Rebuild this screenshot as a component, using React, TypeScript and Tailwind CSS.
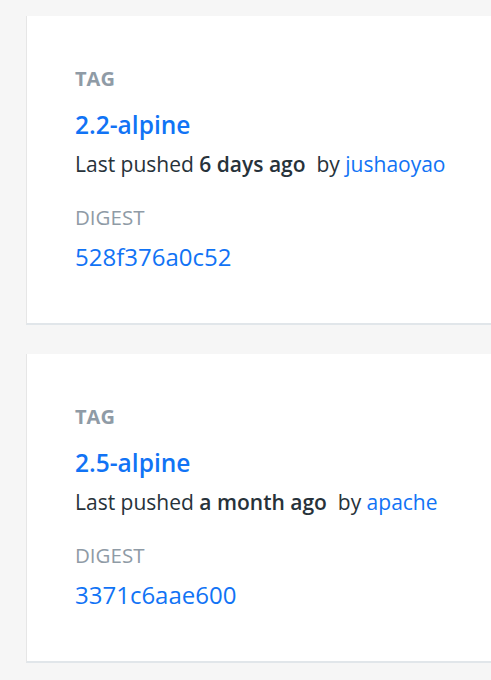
const tags = [
  { name: '2.2-alpine', pushed: '6 days ago', by: 'jushaoyao', digest: '528f376a0c52' },
  { name: '2.5-alpine', pushed: 'a month ago', by: 'apache', digest: '3371c6aae600' },
];

function TagCard({ tag }: { tag: (typeof tags)[number] }) {
  return (
    <div className="bg-white border-l border-l-[#e6e6e6] border-b-2 border-b-[#e1e6ea] pl-[48px] pt-[49px] pb-[50px]">
      <div className="text-[20px] leading-[28px] font-bold text-[#8f9ba6]">TAG</div>
      <div className="mt-[16px] text-[24.5px] leading-[32px] font-semibold text-[#1173f5]">
        {tag.name}
      </div>
      <div className="mt-[9px] text-[21px] leading-[28px] text-[#27323a] whitespace-nowrap">
        Last pushed <span className="font-semibold">{tag.pushed}</span>
        {'\u00a0 by '}
        <span className="text-[#1173f5]">{tag.by}</span>
      </div>
      <div className="mt-[25px] text-[20.5px] leading-[28px] text-[#8f9ba6]">DIGEST</div>
      <div className="mt-[10px] text-[24px] leading-[32px] text-[#1173f5]">{tag.digest}</div>
    </div>
  );
}

export default function App() {
  return (
    <div
      className="min-h-[680px] bg-[#f6f6f6] pt-[16px] pl-[26px] flex flex-col gap-[29px]"
      style={{ fontFamily: '"Open Sans", sans-serif' }}
    >
      {tags.map((t) => (
        <TagCard key={t.name} tag={t} />
      ))}
    </div>
  );
}
